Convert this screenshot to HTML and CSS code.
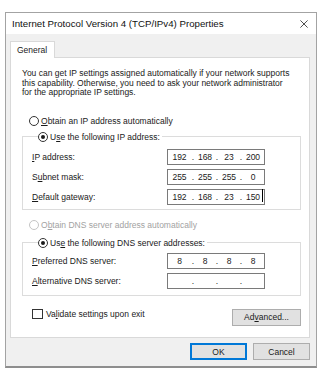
FILE: index.html
```html
<!DOCTYPE html>
<html>
<head>
<meta charset="utf-8">
<link rel="stylesheet" href="styles.css">
</head>
<body>
<div class="window">
  <div class="titlebar">
    <span class="title">Internet Protocol Version 4 (TCP/IPv4) Properties</span>
    <svg class="close" viewBox="0 0 10 10"><path d="M0.5 0.5 L9.5 9.5 M9.5 0.5 L0.5 9.5" stroke="#222" stroke-width="1" fill="none"/></svg>
  </div>
  <div class="body">
    <div class="tabs"><div class="tab">General</div></div>
    <div class="panel">
      <p class="intro">You can get IP settings assigned automatically if your network supports<br>this capability. Otherwise, you need to ask your network administrator<br>for the appropriate IP settings.</p>
      <div class="option"><span class="radio"></span><span><u>O</u>btain an IP address automatically</span></div>
      <fieldset class="group ipgroup">
        <legend class="option"><span class="radio checked"></span><span>U<u>s</u>e the following IP address:</span></legend>
        <div class="row"><span class="label"><u>I</u>P address:</span>
          <div class="ip"><span class="oct first">192</span><span class="dot">.</span><span class="oct">168</span><span class="dot">.</span><span class="oct">23</span><span class="dot">.</span><span class="oct">200</span></div></div>
        <div class="row"><span class="label">S<u>u</u>bnet mask:</span>
          <div class="ip"><span class="oct first">255</span><span class="dot">.</span><span class="oct">255</span><span class="dot">.</span><span class="oct">255</span><span class="dot">.</span><span class="oct">0</span></div></div>
        <div class="row"><span class="label"><u>D</u>efault gateway:</span>
          <div class="ip"><span class="oct first">192</span><span class="dot">.</span><span class="oct">168</span><span class="dot">.</span><span class="oct">23</span><span class="dot">.</span><span class="oct">150<span class="caret"></span></span></div></div>
      </fieldset>
      <div class="option disabled dnsauto"><span class="radio"></span><span>O<u>b</u>tain DNS server address automatically</span></div>
      <fieldset class="group dnsgroup">
        <legend class="option"><span class="radio checked"></span><span>Us<u>e</u> the following DNS server addresses:</span></legend>
        <div class="row"><span class="label"><u>P</u>referred DNS server:</span>
          <div class="ip"><span class="oct first">8</span><span class="dot">.</span><span class="oct">8</span><span class="dot">.</span><span class="oct">8</span><span class="dot">.</span><span class="oct">8</span></div></div>
        <div class="row"><span class="label"><u>A</u>lternative DNS server:</span>
          <div class="ip"><span class="oct first"></span><span class="dot">.</span><span class="oct"></span><span class="dot">.</span><span class="oct"></span><span class="dot">.</span><span class="oct"></span></div></div>
      </fieldset>
      <div class="bottomrow">
        <div class="check"><span class="box"></span><span>Va<u>l</u>idate settings upon exit</span></div>
        <button class="btn adv">Ad<u>v</u>anced...</button>
      </div>
    </div>
    <div class="buttons">
      <button class="btn ok">OK</button>
      <button class="btn">Cancel</button>
    </div>
  </div>
</div>
</body>
</html>
```

FILE: styles.css
```css
* { box-sizing: border-box; }
html, body { margin: 0; padding: 0; background: #fff; }
body {
  font-family: "Liberation Sans", Arial, sans-serif;
  font-size: 8.5px;
  color: #1a1a1a;
}
u { text-decoration: underline; text-underline-offset: 1px; }

.window {
  margin: 12px 0 0 5px;
  width: 312px;
  height: 356px;
  border: 1px solid #a3a3a3;
  border-bottom: 2px solid #8e8e8e;
  background: #f0f0f0;
  display: flex;
  flex-direction: column;
}
.titlebar {
  height: 21px;
  flex: none;
  background: #fff;
  display: flex;
  align-items: center;
  justify-content: space-between;
  padding: 0 8px 0 6px;
}
.title { font-size: 9.7px; color: #111; }
.close { width: 8px; height: 8px; }

.body {
  flex: 1;
  padding: 7px 6px 0 4px;
  display: flex;
  flex-direction: column;
}
.tabs { display: flex; position: relative; z-index: 1; }
.tab {
  height: 17px;
  margin-bottom: -1px;
  padding: 0 7px 0 6px;
  border: 1px solid #d9d9d9;
  border-bottom: none;
  background: #fff;
  display: flex;
  align-items: center;
}
.panel {
  height: 281px;
  flex: none;
  border: 1px solid #d9d9d9;
  background: #fff;
  padding: 11px 8px 0 11px;
}
.intro { margin: 0; line-height: 9.6px; }

.option {
  display: flex;
  align-items: center;
  height: 12px;
  gap: 2px;
}
.panel > .option { margin: 17px 0 0 7px; }
.radio {
  width: 10px;
  height: 10px;
  border: 1px solid #333;
  border-radius: 50%;
  background: #fff;
  display: flex;
  align-items: center;
  justify-content: center;
  flex: none;
}
.radio.checked::after {
  content: "";
  width: 4px;
  height: 4px;
  border-radius: 50%;
  background: #1a1a1a;
}
.disabled { color: #a2a2a2; }
.disabled .radio { border-color: #c4c4c4; }

.group {
  margin: 4px 0 0 0;
  padding: 6px 0 4px 9px;
  border: 1px solid #dcdcdc;
  display: flex;
  flex-direction: column;
  gap: 4px;
}
.group legend {
  margin-left: 6px;
  padding: 0 2px 0 0;
}
.panel > .dnsauto { margin-top: 9px; }
.dnsgroup { margin-top: 6px; padding-top: 4px; padding-bottom: 6px; }

.row {
  display: flex;
  align-items: center;
  height: 16px;
}
.label { width: 135px; flex: none; }
.ip {
  width: 98px;
  height: 16px;
  border: 1px solid #7a7a7a;
  display: flex;
  align-items: center;
  background: #fff;
}
.oct { width: 20px; text-align: center; position: relative; }
.oct.first { width: 23px; }
.dot { width: 4px; text-align: center; }
.caret {
  position: absolute;
  right: 0;
  top: -3px;
  width: 1px;
  height: 13px;
  background: #000;
}

.bottomrow {
  margin-top: 13px;
  display: flex;
  justify-content: space-between;
  align-items: flex-start;
}
.check {
  display: flex;
  align-items: center;
  gap: 3px;
  margin-left: 10px;
  height: 10px;
}
.box {
  width: 11px;
  height: 10px;
  border: 1px solid #333;
  background: #fff;
}

.btn {
  font-family: inherit;
  font-size: 8.5px;
  color: #1a1a1a;
  height: 17px;
  background: #e1e1e1;
  border: 1px solid #adadad;
  padding: 0;
  margin: 0;
}
.adv { width: 69px; }
.buttons {
  margin-top: 5px;
  display: flex;
  justify-content: flex-end;
  gap: 6px;
}
.buttons .btn { width: 57px; }
.ok { border-color: #0078d7; box-shadow: inset 0 0 0 1px #0078d7; }
```
